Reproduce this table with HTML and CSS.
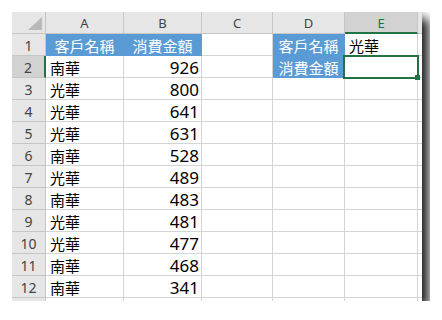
FILE: index.html
```html
<!DOCTYPE html>
<html lang="zh-Hant">
<head>
  <meta charset="UTF-8">
  <meta name="viewport" content="width=device-width, initial-scale=1.0">
  <title>消費金額</title>
  <link rel="stylesheet" href="styles.css">
</head>
<body>
  <div class="sheet">
    <div class="grid">
      <!-- 欄標題 -->
      <div class="hd corner"><span class="tri"></span></div>
      <div class="hd col">A</div>
      <div class="hd col">B</div>
      <div class="hd col">C</div>
      <div class="hd col">D</div>
      <div class="hd col active">E</div>
      <div class="hd col"></div>

      <div class="hd row">1</div>
      <div class="c blue">客戶名稱</div>
      <div class="c blue">消費金額</div>
      <div class="c"></div>
      <div class="c blue">客戶名稱</div>
      <div class="c txt">光華</div>
      <div class="c"></div>

      <div class="hd row active">2</div>
      <div class="c txt">南華</div>
      <div class="c num">926</div>
      <div class="c"></div>
      <div class="c blue">消費金額</div>
      <div class="c sel"><span class="selbox"><span class="handle"></span></span></div>
      <div class="c"></div>

      <div class="hd row">3</div>
      <div class="c txt">光華</div>
      <div class="c num">800</div>
      <div class="c"></div><div class="c"></div><div class="c"></div><div class="c"></div>

      <div class="hd row">4</div>
      <div class="c txt">光華</div>
      <div class="c num">641</div>
      <div class="c"></div><div class="c"></div><div class="c"></div><div class="c"></div>

      <div class="hd row">5</div>
      <div class="c txt">光華</div>
      <div class="c num">631</div>
      <div class="c"></div><div class="c"></div><div class="c"></div><div class="c"></div>

      <div class="hd row">6</div>
      <div class="c txt">南華</div>
      <div class="c num">528</div>
      <div class="c"></div><div class="c"></div><div class="c"></div><div class="c"></div>

      <div class="hd row">7</div>
      <div class="c txt">光華</div>
      <div class="c num">489</div>
      <div class="c"></div><div class="c"></div><div class="c"></div><div class="c"></div>

      <div class="hd row">8</div>
      <div class="c txt">南華</div>
      <div class="c num">483</div>
      <div class="c"></div><div class="c"></div><div class="c"></div><div class="c"></div>

      <div class="hd row">9</div>
      <div class="c txt">光華</div>
      <div class="c num">481</div>
      <div class="c"></div><div class="c"></div><div class="c"></div><div class="c"></div>

      <div class="hd row">10</div>
      <div class="c txt">光華</div>
      <div class="c num">477</div>
      <div class="c"></div><div class="c"></div><div class="c"></div><div class="c"></div>

      <div class="hd row">11</div>
      <div class="c txt">南華</div>
      <div class="c num">468</div>
      <div class="c"></div><div class="c"></div><div class="c"></div><div class="c"></div>

      <div class="hd row">12</div>
      <div class="c txt">南華</div>
      <div class="c num">341</div>
      <div class="c"></div><div class="c"></div><div class="c"></div><div class="c"></div>

      <!-- 第 13 列只露出一點邊 -->
      <div class="hd row"></div>
      <div class="c"></div><div class="c"></div><div class="c"></div>
      <div class="c"></div><div class="c"></div><div class="c"></div>
    </div>
  </div>
</body>
</html>
```

FILE: styles.css
```css
body{
  margin: 12px;
  background: #fff;
  font-family: "Noto Sans CJK TC", sans-serif;
}

.sheet{
  width: 410px;
  height: 289px;
  overflow: hidden;
  background: #fff;
  box-shadow: 0 0 7px rgba(0, 0, 0, .18), 7px 7px 10px rgba(0, 0, 0, .85);
}

.grid{
  display: grid;
  grid-template-columns: 34px 78px 78px 71px 72px 73px 30px;
  grid-auto-rows: 22px;
}

.grid > div{
  box-sizing: border-box;
  border-right: 1px solid #d4d4d4;
  border-bottom: 1px solid #d4d4d4;
  display: flex;
  align-items: center;
  white-space: nowrap;
}

/* 欄列標題 */
.hd{
  background: #e6e6e6;
  color: #444;
  font-family: "Noto Sans", sans-serif;
  justify-content: center;
}
.grid > .hd{
  border-color: #c6c6c6;
}
.hd.col{
  font-size: 13px;
  padding-top: 1px;
}
.hd.row{
  font-size: 14px;
  padding-top: 1px;
}
.hd.active{
  background: #d2d2d2;
  color: #217346;
}
.grid > .hd.col.active{
  border-bottom: 2px solid #217346;
}
.grid > .hd.row.active{
  border-right: 2px solid #217346;
  color: #444;
}

.corner{
  position: relative;
}
.tri{
  position: absolute;
  right: 3px;
  bottom: 3px;
  width: 0;
  height: 0;
  border-left: 14px solid transparent;
  border-bottom: 13px solid #b9b9b9;
}

/* 儲存格 */
.c{
  font-size: 15px;
  color: #000;
  padding-top: 1px;
}
.txt{
  padding-left: 4px;
}
.num{
  justify-content: flex-end;
  padding-right: 2px;
  font-family: "Noto Sans", sans-serif;
  font-size: 17px;
}
.grid > .blue{
  background: #5b9bd5;
  color: #fff;
  justify-content: center;
  border-right-color: #5b9bd5;
  border-bottom-color: #5b9bd5;
}

.sel{
  position: relative;
}
.selbox{
  position: absolute;
  left: -2px;
  top: -1px;
  right: -2px;
  bottom: -2px;
  border: 2px solid #217346;
}
.handle{
  position: absolute;
  right: -3px;
  bottom: -3px;
  width: 5px;
  height: 5px;
  background: #217346;
}
```
